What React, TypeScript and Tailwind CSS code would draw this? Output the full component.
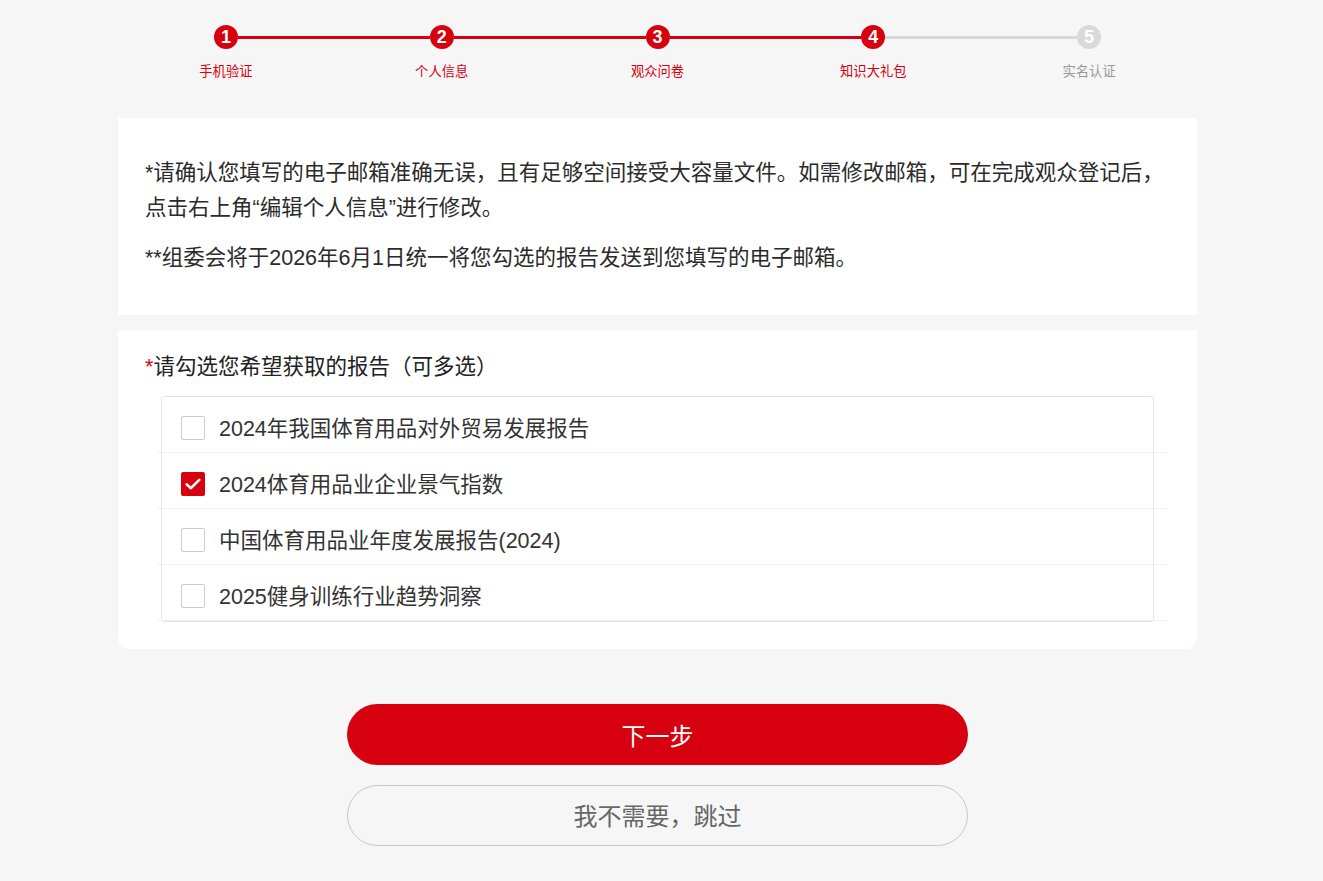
import React, { useState } from 'react';

const steps = [
  { n: 1, label: '手机验证' },
  { n: 2, label: '个人信息' },
  { n: 3, label: '观众问卷' },
  { n: 4, label: '知识大礼包' },
  { n: 5, label: '实名认证' },
];

const current = 4;

const reports = [
  '2024年我国体育用品对外贸易发展报告',
  '2024体育用品业企业景气指数',
  '中国体育用品业年度发展报告(2024)',
  '2025健身训练行业趋势洞察',
];

function StepBar() {
  return (
    <div className="grid grid-cols-5">
      {steps.map((s, i) => {
        const done = s.n <= current;
        const leftColor =
          i === 0 ? 'bg-transparent' : s.n <= current ? 'bg-[#d7000f]' : 'bg-[#d9d9d9]';
        const rightColor =
          i === steps.length - 1
            ? 'bg-transparent'
            : s.n + 1 <= current
            ? 'bg-[#d7000f]'
            : 'bg-[#d9d9d9]';
        return (
          <div key={s.n} className="flex flex-col items-center">
            <div className="flex w-full items-center">
              <div className={`h-[3px] flex-1 ${leftColor}`} />
              <div
                className={`flex h-6 w-6 shrink-0 items-center justify-center rounded-full text-[18px] font-bold leading-none text-white ${
                  done ? 'bg-[#d7000f]' : 'bg-[#d9d9d9]'
                }`}
              >
                {s.n}
              </div>
              <div className={`h-[3px] flex-1 ${rightColor}`} />
            </div>
            <div
              className={`mt-[14px] text-[13.3px] leading-[18px] ${
                done ? 'text-[#d7000f]' : 'text-[#999]'
              }`}
            >
              {s.label}
            </div>
          </div>
        );
      })}
    </div>
  );
}

function Checkbox({ checked }: { checked: boolean }) {
  if (checked) {
    return (
      <div className="flex h-6 w-6 shrink-0 items-center justify-center rounded-[2px] bg-[#d7000f]">
        <svg viewBox="0 0 24 24" className="h-5 w-5" fill="none" stroke="white" strokeWidth={3.2} strokeLinecap="round" strokeLinejoin="round">
          <path d="M4.5 12.5l5 4.5L19.5 7" />
        </svg>
      </div>
    );
  }
  return <div className="h-6 w-6 shrink-0 rounded-[2px] border border-[#cccccc] bg-white" />;
}

export default function App() {
  const [selected, setSelected] = useState<number[]>([1]);

  const toggle = (i: number) => {
    setSelected(prev => (prev.includes(i) ? prev.filter(x => x !== i) : [...prev, i]));
  };

  return (
    <div
      className="min-h-[881px] bg-[#f6f6f6] pb-[35px] pr-[8px] pt-[25px]"
      style={{ fontFamily: "'Liberation Sans', 'Noto Sans CJK SC', sans-serif" }}
    >
      <div className="mx-auto w-[1079px]">
        <StepBar />

        {/* 说明 */}
        <div className="mt-[37px] bg-white pb-[39px] pl-[27px] pr-[20px] pt-[38px] text-[21.5px] leading-[35px] text-[#2b2b2b]">
          <p>
            *请确认您填写的电子邮箱准确无误，且有足够空间接受大容量文件。如需修改邮箱，可在完成观众登记后，点击右上角“编辑个人信息”进行修改。
          </p>
          <p className="mt-[15px]">**组委会将于2026年6月1日统一将您勾选的报告发送到您填写的电子邮箱。</p>
        </div>

        {/* 报告选择 */}
        <div className="mt-[15px] rounded-b-xl bg-white px-[27px] pb-[27px] pt-[20px]">
          <div className="text-[21.5px] leading-[35px] text-[#222]">
            <span className="text-[#e60012]">*</span>请勾选您希望获取的报告（可多选）
          </div>
          <div className="mx-4 mt-[11px] rounded-[3px] border border-[#e3e3e3]">
            {reports.map((r, i) => (
              <div
                key={r}
                onClick={() => toggle(i)}
                className="-ml-[4px] flex h-14 w-[calc(100%+17px)] cursor-pointer items-center gap-[14px] border-b border-[#f0f0f0] pl-[23px] pt-[6px]"
              >
                <Checkbox checked={selected.includes(i)} />
                <span className="pt-[3px] text-[21.5px] text-[#333]">{r}</span>
              </div>
            ))}
          </div>
        </div>

        {/* 按钮 */}
        <div className="mt-[55px] flex flex-col items-center gap-5">
          <button className="h-[61px] w-[621px] rounded-full bg-[#d7000f] pt-[4px] text-[24px] text-white">
            下一步
          </button>
          <button className="h-[61px] w-[621px] rounded-full border border-[#c8c8c8] pt-[2px] text-[24px] text-[#666]">
            我不需要，跳过
          </button>
        </div>
      </div>
    </div>
  );
}
